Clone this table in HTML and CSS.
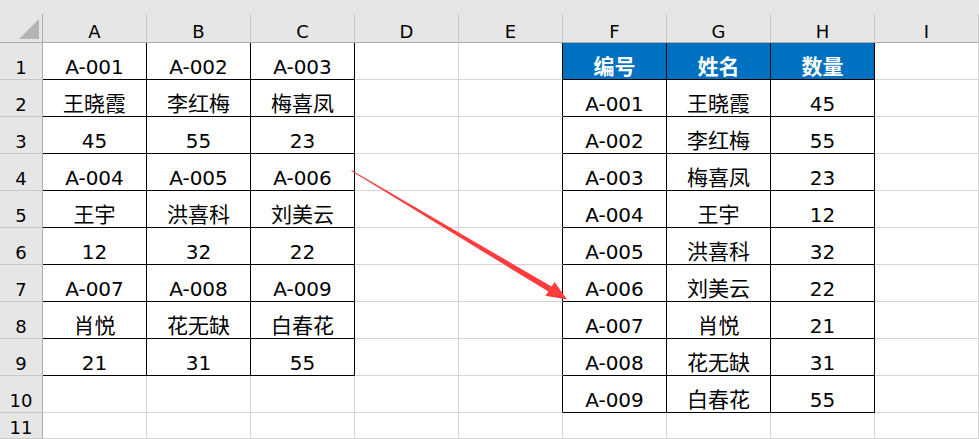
FILE: index.html
```html
<!DOCTYPE html>
<html lang="zh">
<head>
<meta charset="utf-8">
<title>Sheet</title>
<link rel="stylesheet" href="styles.css">
</head>
<body>
<div class="sheet">
  <div class="topbar"></div>

  <div class="corner"><div class="tri"></div></div>
  <div class="colhead">A</div><div class="colhead">B</div><div class="colhead">C</div><div class="colhead">D</div><div class="colhead">E</div><div class="colhead">F</div><div class="colhead">G</div><div class="colhead">H</div><div class="colhead">I</div>

  <div class="rowhead">1</div>
  <div class="cell bk">A-001</div><div class="cell bk">A-002</div><div class="cell bk">A-003</div><div class="cell"></div><div class="cell br"></div>
  <div class="cell hd zh">编号</div><div class="cell hd zh">姓名</div><div class="cell hd zh">数量</div><div class="cell"></div>

  <div class="rowhead">2</div>
  <div class="cell bk zh">王晓霞</div><div class="cell bk zh">李红梅</div><div class="cell bk zh">梅喜凤</div><div class="cell"></div><div class="cell br"></div>
  <div class="cell bk">A-001</div><div class="cell bk zh">王晓霞</div><div class="cell bk">45</div><div class="cell"></div>

  <div class="rowhead">3</div>
  <div class="cell bk">45</div><div class="cell bk">55</div><div class="cell bk">23</div><div class="cell"></div><div class="cell br"></div>
  <div class="cell bk">A-002</div><div class="cell bk zh">李红梅</div><div class="cell bk">55</div><div class="cell"></div>

  <div class="rowhead">4</div>
  <div class="cell bk">A-004</div><div class="cell bk">A-005</div><div class="cell bk">A-006</div><div class="cell"></div><div class="cell br"></div>
  <div class="cell bk">A-003</div><div class="cell bk zh">梅喜凤</div><div class="cell bk">23</div><div class="cell"></div>

  <div class="rowhead">5</div>
  <div class="cell bk zh">王宇</div><div class="cell bk zh">洪喜科</div><div class="cell bk zh">刘美云</div><div class="cell"></div><div class="cell br"></div>
  <div class="cell bk">A-004</div><div class="cell bk zh">王宇</div><div class="cell bk">12</div><div class="cell"></div>

  <div class="rowhead">6</div>
  <div class="cell bk">12</div><div class="cell bk">32</div><div class="cell bk">22</div><div class="cell"></div><div class="cell br"></div>
  <div class="cell bk">A-005</div><div class="cell bk zh">洪喜科</div><div class="cell bk">32</div><div class="cell"></div>

  <div class="rowhead">7</div>
  <div class="cell bk">A-007</div><div class="cell bk">A-008</div><div class="cell bk">A-009</div><div class="cell"></div><div class="cell br"></div>
  <div class="cell bk">A-006</div><div class="cell bk zh">刘美云</div><div class="cell bk">22</div><div class="cell"></div>

  <div class="rowhead">8</div>
  <div class="cell bk zh">肖悦</div><div class="cell bk zh">花无缺</div><div class="cell bk zh">白春花</div><div class="cell"></div><div class="cell br"></div>
  <div class="cell bk">A-007</div><div class="cell bk zh">肖悦</div><div class="cell bk">21</div><div class="cell"></div>

  <div class="rowhead">9</div>
  <div class="cell bk">21</div><div class="cell bk">31</div><div class="cell bk">55</div><div class="cell"></div><div class="cell br"></div>
  <div class="cell bk">A-008</div><div class="cell bk zh">花无缺</div><div class="cell bk">31</div><div class="cell"></div>

  <div class="rowhead">10</div>
  <div class="cell"></div><div class="cell"></div><div class="cell"></div><div class="cell"></div><div class="cell br"></div>
  <div class="cell bk">A-009</div><div class="cell bk zh">白春花</div><div class="cell bk">55</div><div class="cell"></div>

  <div class="rowhead last">11</div>
  <div class="cell"></div><div class="cell"></div><div class="cell"></div><div class="cell"></div><div class="cell"></div>
  <div class="cell"></div><div class="cell"></div><div class="cell"></div><div class="cell"></div>

  <svg class="arrow" width="979" height="439" viewBox="0 0 979 439" xmlns="http://www.w3.org/2000/svg">
    <polygon fill="#ff3d3d" points="351.2,171.0 351.8,170.2 551.6,286.6 554.6,282.0 567,299.5 545.4,295.8 548.4,291.6"/>
  </svg>
</div>
</body>
</html>
```

FILE: styles.css
```css
* {
  box-sizing: border-box;
}

body {
  margin: 0;
  width: 979px;
  height: 439px;
  overflow: hidden;
  background: #ffffff;
  font-family: "DejaVu Sans", "Noto Sans CJK SC", sans-serif;
  color: #000000;
}

.sheet {
  position: relative;
  display: grid;
  grid-template-columns: 43px repeat(9, 104px);
  grid-template-rows: 14px 29px repeat(10, 37px) 26px;
}

.topbar {
  grid-column: 1 / -1;
  background: #e6e6e6;
}

.corner {
  background: #e6e6e6;
  border-right: 1px solid #ababab;
  border-bottom: 1px solid #ababab;
}

.tri {
  width: 0;
  height: 0;
  margin: 5px 0 0 19px;
  border-left: 20px solid transparent;
  border-bottom: 20px solid #b4b4b4;
}

.colhead {
  background: #e6e6e6;
  border-right: 1px solid #c8c8c8;
  border-bottom: 1px solid #ababab;
  font-size: 18px;
  line-height: 18px;
  display: flex;
  align-items: flex-end;
  justify-content: center;
  padding-bottom: 1px;
}

.rowhead {
  background: #e6e6e6;
  border-right: 1px solid #ababab;
  border-bottom: 1px solid #c8c8c8;
  font-size: 18px;
  line-height: 18px;
  display: flex;
  align-items: flex-end;
  justify-content: center;
  padding-bottom: 2px;
}

.rowhead.last {
  padding-bottom: 1px;
}

.cell {
  border-right: 1px solid #d4d4d4;
  border-bottom: 1px solid #d4d4d4;
  font-size: 20px;
  line-height: 20px;
  display: flex;
  align-items: flex-end;
  justify-content: center;
  padding-bottom: 2px;
  white-space: nowrap;
}

.cell.zh {
  font-size: 21px;
}

.cell.bk {
  border-right-color: #000000;
  border-bottom-color: #000000;
}

.cell.br {
  border-right-color: #000000;
}

.cell.hd {
  background: #0070c0;
  color: #ffffff;
  font-weight: bold;
  border-right-color: #000000;
  border-bottom-color: #000000;
}

.arrow {
  position: absolute;
  left: 0;
  top: 0;
  pointer-events: none;
}
```
